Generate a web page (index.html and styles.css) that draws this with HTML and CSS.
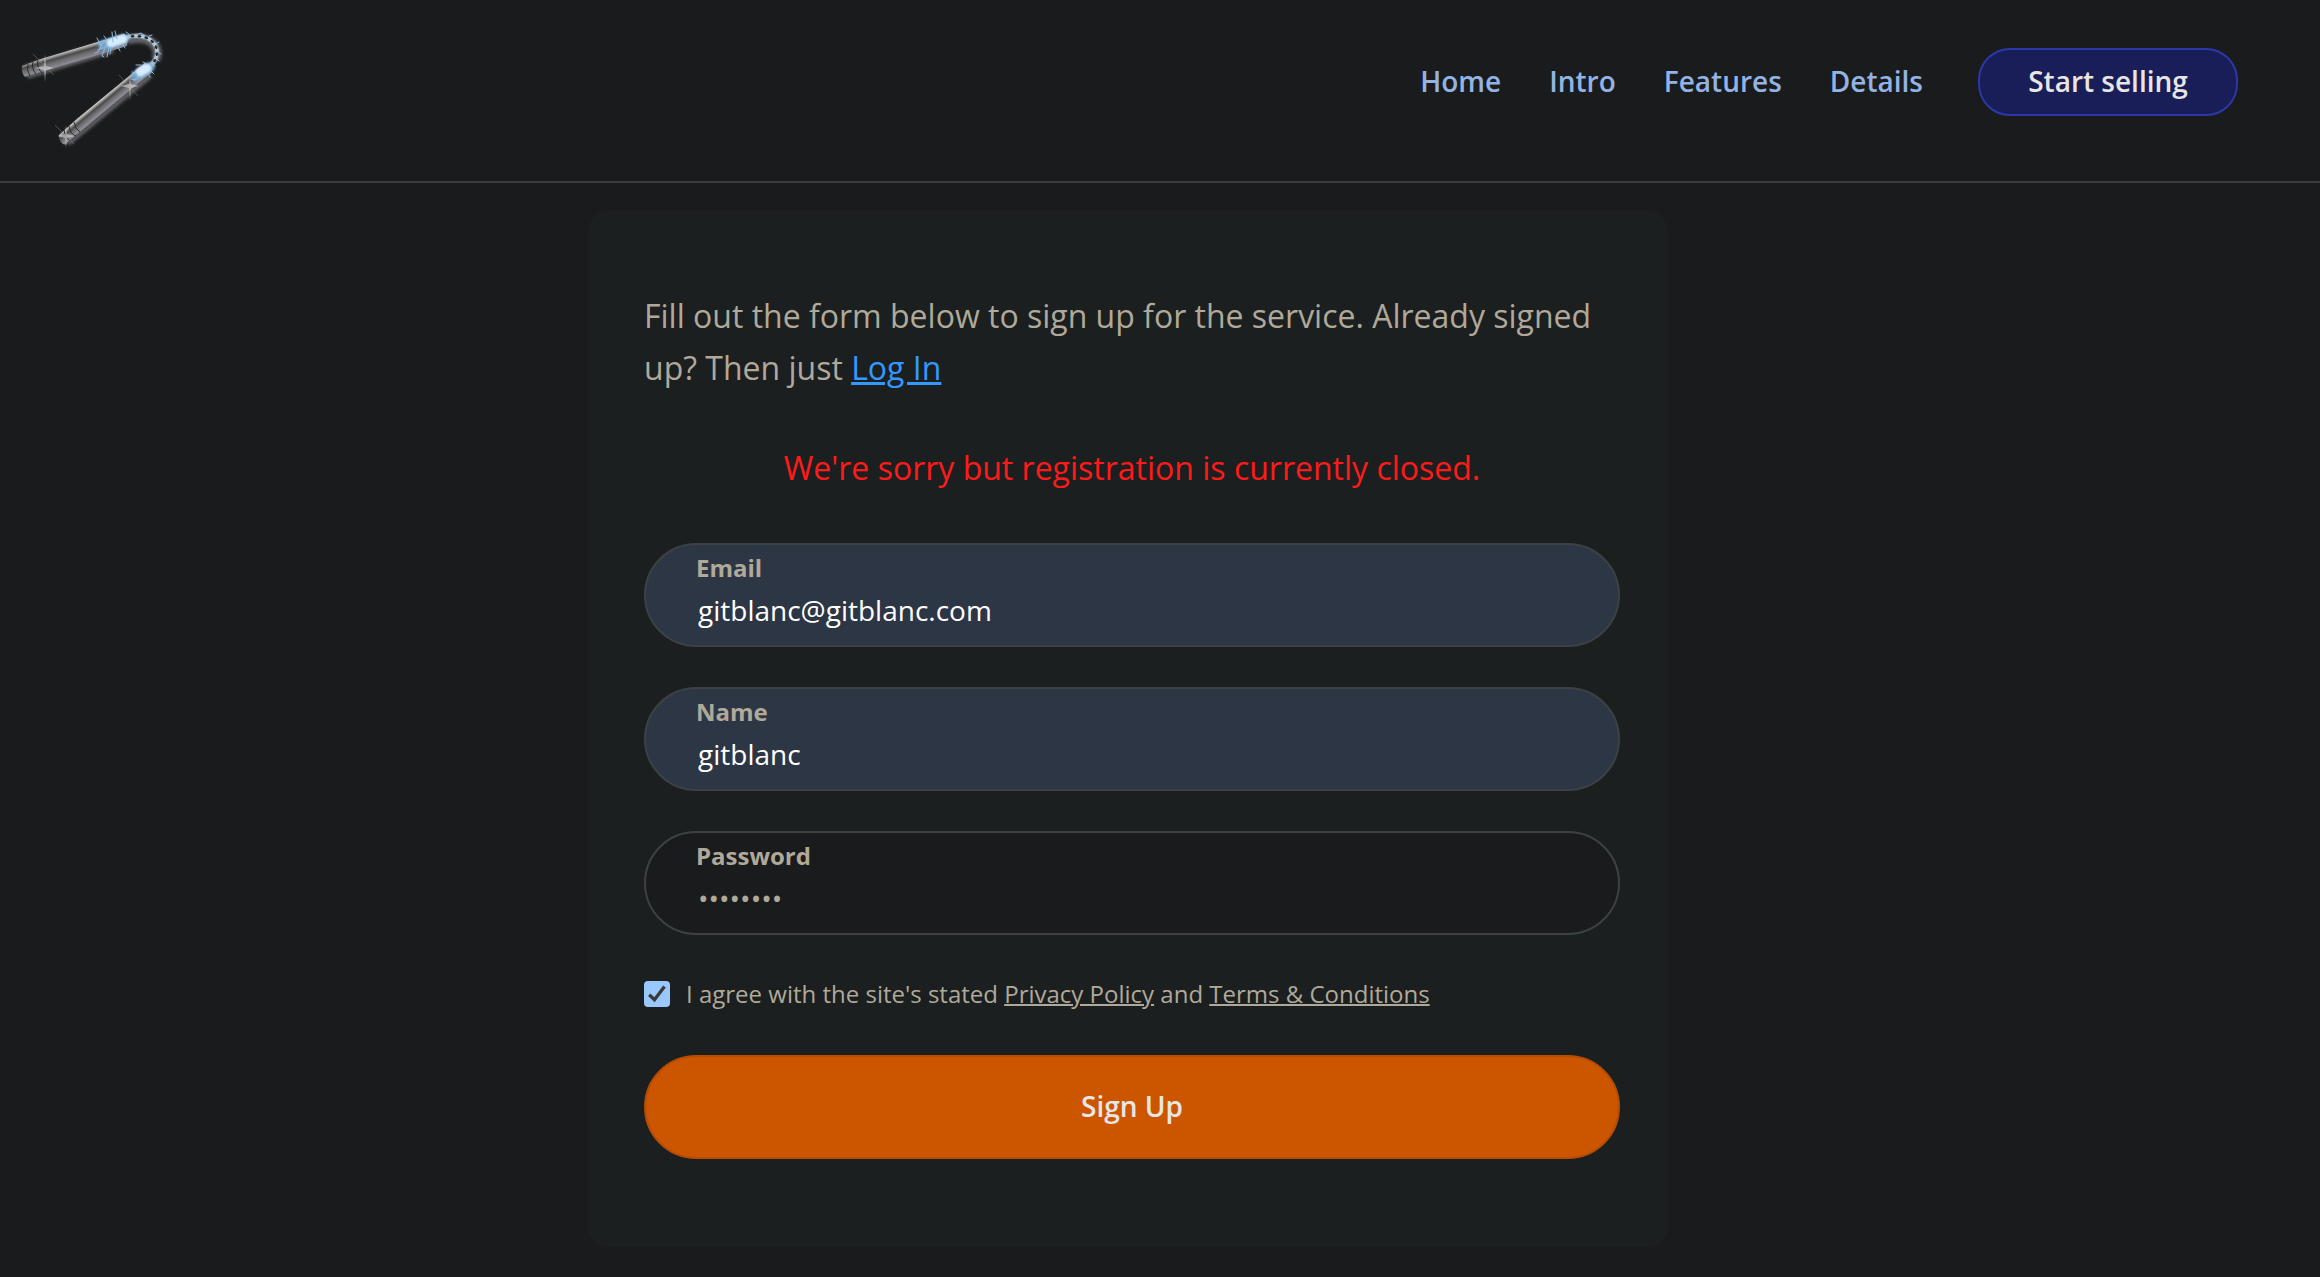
FILE: index.html
```html
<!DOCTYPE html>
<html lang="en">
<head>
<meta charset="utf-8">
<title>Sign Up</title>
<link rel="stylesheet" href="styles.css">
</head>
<body>
<header class="header">
  <a class="logo" href="#" aria-label="Home">
    <svg width="180" height="170" viewBox="0 0 180 170">
      <defs>
        <linearGradient id="steelA" gradientUnits="userSpaceOnUse" x1="70" y1="47" x2="75" y2="64">
          <stop offset="0" stop-color="#8f8f8f"/><stop offset=".18" stop-color="#c9c8c6"/><stop offset=".4" stop-color="#4a4a4a"/><stop offset=".58" stop-color="#6c6c6e"/><stop offset=".85" stop-color="#8b8a93"/><stop offset="1" stop-color="#242426"/>
        </linearGradient>
        <linearGradient id="steelB" gradientUnits="userSpaceOnUse" x1="94" y1="102" x2="104" y2="114">
          <stop offset="0" stop-color="#999"/><stop offset=".18" stop-color="#c9c8c6"/><stop offset=".4" stop-color="#4a4a4a"/><stop offset=".58" stop-color="#6c6c6e"/><stop offset=".85" stop-color="#8f8e98"/><stop offset="1" stop-color="#242426"/>
        </linearGradient>
        <filter id="soft" x="-20%" y="-20%" width="140%" height="140%"><feGaussianBlur stdDeviation="1.8"/></filter>
        <filter id="frost" x="-50%" y="-50%" width="200%" height="200%"><feGaussianBlur stdDeviation="1.3"/></filter>
      </defs>
      <g fill="none" stroke="#77777b" stroke-opacity=".75" stroke-width="14" filter="url(#soft)">
        <path d="M26 72L112 46M65 140L148 72"/>
        <path d="M128 40C149 35 161 45 156 60" stroke-width="9"/>
      </g>
      <path d="M22 66L41 59L124 34Q129 38 127 46L45 72L25 77Q21 73 22 66Z" fill="url(#steelA)"/>
      <path d="M59 135L78 118L145 63Q153 65 152 73L84 130L66 145Q59 144 59 135Z" fill="url(#steelB)"/>
      <path d="M28 64q-2 6 2 12M33 62q-2 6 3 12M38 60q-2 7 4 13M64 130q1 8 7 11M69 126q1 8 7 10M74 122q1 7 6 10" fill="none" stroke="#222" stroke-width=".9"/>
      <g fill="none" stroke-linecap="round">
        <path d="M128 37C146 33 158 42 157 54Q156 61 150 66" stroke="#6f7a86" stroke-width="5.5"/>
        <path d="M128 37C146 33 158 42 157 54Q156 61 150 66" stroke="#b7c8d5" stroke-width="3.6" stroke-dasharray="2 5"/>
        <path d="M128 37C146 33 158 42 157 54Q156 61 150 66" stroke="#1c2126" stroke-width="1.8" stroke-dasharray="2 5" stroke-dashoffset="3.5"/>
        <path d="M103 45L124 39M136 76L150 67" stroke="#7db4e0" stroke-opacity=".8" stroke-width="10" filter="url(#frost)"/>
        <path d="M111 43L123 39M140 72L147 68" stroke="#d6ecff" stroke-width="9" filter="url(#frost)"/>
        <path d="M101 46l-4-8M103 43l-5 9-3 1M106 45l-4 11 2 1M109 47l-2 10M113 42l-1-10M117 39l-2-8M103 48l-5 2M111 47l-1 7M117 45l3 6M122 44l3 4M107 40l-3-4M129 34l-3-2M138 34l3-1 3 2M149 36l3-1M156 44l3-2M158 52l3 2M156 58l3 3M152 65l3 1M151 71l3 3M147 64l-4-2M141 65l-5 0M137 74l-5-2M138 78l-4 2M135 80l-4-1M148 74l2 3" stroke="#88bce6" stroke-width="1"/>
      </g>
      <g fill="#e8e8e8" opacity=".8">
        <path d="M45 54l1 12 8 2-8 2-1 12-1-12-9-2 9-2zM130 75l.8 9 8 2-8 2-.8 13-.8-13-9-2 9-2zM66 125l.8 9 8 2-8 2-.8 11-.8-11-8-2 8-2z" opacity=".65"/>
        <path d="M33 54L54 75M119 75L138 96M55 125L74 144" stroke="#bbb" stroke-width=".7" opacity=".55"/>
      </g>
    </svg>
  </a>
  <nav class="nav">
    <a class="nav-link" href="#">Home</a>
    <a class="nav-link" href="#">Intro</a>
    <a class="nav-link" href="#">Features</a>
    <a class="nav-link" href="#">Details</a>
    <a class="nav-button" href="#">Start selling</a>
  </nav>
</header>
<main class="card">
  <p class="intro">Fill out the form below to sign up for the service. Already signed up? Then just <a class="login" href="#">Log In</a></p>
  <p class="error">We're sorry but registration is currently closed.</p>
  <form class="form">
    <label class="field filled"><span class="field-label">Email</span><input class="field-input" type="text" value="gitblanc@gitblanc.com"></label>
    <label class="field filled"><span class="field-label">Name</span><input class="field-input" type="text" value="gitblanc"></label>
    <label class="field"><span class="field-label">Password</span><input class="field-input" type="password" value="password"></label>
    <div class="terms">
      <svg class="check" width="26" height="26" viewBox="0 0 26 26"><rect width="26" height="26" rx="4" fill="#99c8ff"/><path d="M5.2 13.8L10.5 18.8L20.5 5.5" fill="none" stroke="#3b3b3b" stroke-width="3.4"/></svg>
      <span>I agree with the site's stated <a href="#">Privacy Policy</a> and <a href="#">Terms &amp; Conditions</a></span>
    </div>
    <button class="submit" type="button">Sign Up</button>
  </form>
</main>
</body>
</html>
```
FILE: styles.css
```css
* { box-sizing: border-box; }
body {
  margin: 0;
  min-height: 1277px;
  background: #1a1b1c;
  color: #b0a99a;
  font-family: "Open Sans", sans-serif;
  overflow: hidden;
}
.header {
  display: flex;
  justify-content: space-between;
  align-items: flex-start;
  height: 183px;
  padding-right: 82px;
  border-bottom: 2px solid #3a3c3e;
}
.logo, .logo svg { display: block; }
.nav {
  display: flex;
  align-items: center;
  gap: 48px;
  margin-top: 48px;
  font-size: 28px;
  font-weight: 600;
  line-height: 40px;
}
.nav-link { padding-bottom: 2px; color: #93b3e5; text-decoration: none; }
.nav-button {
  width: 260px;
  height: 68px;
  margin-left: 7px;
  padding-top: 11px;
  border: 2px solid #2d38a8;
  border-radius: 32px;
  background: #191e58;
  color: #e8e6e3;
  text-align: center;
  text-decoration: none;
}
.card {
  width: 1080px;
  height: 1036px;
  margin: 28px 0 0 588px;
  padding: 79px 48px 0 56px;
  border-radius: 20px;
  background: #1b1f20;
}
.intro, .error { margin: 0; font-size: 32px; line-height: 52px; }
.error { margin-top: 48px; color: #ff1a1a; text-align: center; }
.login { color: #3398ff; text-decoration-thickness: 3px; }
.form { display: flex; flex-direction: column; gap: 40px; margin-top: 49px; }
.field {
  display: flex;
  flex-direction: column;
  height: 104px;
  padding: 7px 50px 0;
  border: 2px solid #3c4244;
  border-radius: 52px;
  background: #1a1b1c;
}
.filled { background: #2d3645; }
.field-label { font-size: 24px; font-weight: 700; line-height: 32px; }
.field-input {
  height: 38px;
  margin-top: 7px;
  padding: 0 2px;
  border: 0;
  outline: 0;
  background: transparent;
  color: #b0a99a;
  font: 28px/38px "Open Sans", sans-serif;
}
.filled .field-input { color: #fff; }
.terms { display: flex; align-items: center; gap: 16px; height: 40px; padding-bottom: 2px; font-size: 24px; line-height: 38px; }
.terms a { color: inherit; text-decoration-thickness: 2px; }
.check { flex: none; }
.submit {
  height: 104px;
  padding: 0 0 2px;
  border: 2px solid #b64c00;
  border-radius: 52px;
  background: #cc5500;
  color: #e8e6e3;
  font: 600 28px "Open Sans", sans-serif;
}
```
